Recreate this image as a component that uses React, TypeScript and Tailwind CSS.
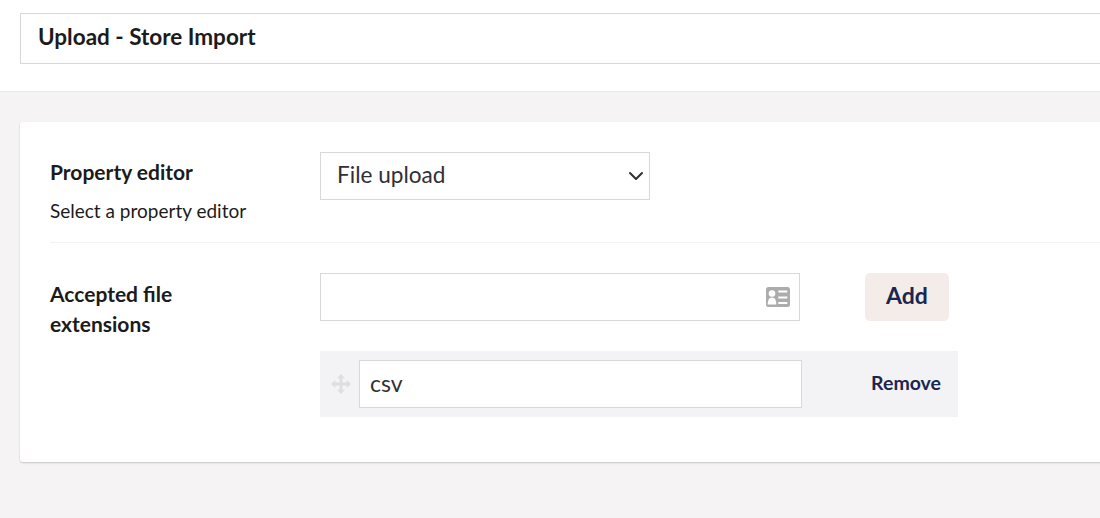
import { ChevronDown } from 'lucide-react';

function ContactIcon() {
  return (
    <svg viewBox="0 0 24 20" className="w-6 h-5 shrink-0" aria-hidden="true">
      <rect x="0" y="0" width="24" height="20" rx="2.5" fill="#acacac" />
      <circle cx="6" cy="6.500" r="3.300" fill="#fff" />
      <path d="M1.700 17.500c0-4.200 1.400-7 4.300-7s4.300 2.800 4.300 7z" fill="#fff" />
      <rect x="12.300" y="3.500" width="9" height="2" fill="#fff" />
      <rect x="12.300" y="9.500" width="9" height="2" fill="#fff" />
      <rect x="12.300" y="15" width="9" height="2" fill="#fff" />
    </svg>
  );
}

function MoveIcon() {
  return (
    <svg viewBox="0 0 20 20" className="w-5 h-5 translate-x-px" aria-hidden="true" fill="#dedee0">
      <path d="M10 0l4 4.200h-2.600v4.400h4.400V6l4.200 4-4.200 4v-2.600h-4.400v4.400H14L10 20l-4-4.200h2.600v-4.400H4.200V14L0 10l4.200-4v2.600h4.400V4.200H6z" />
    </svg>
  );
}

export default function App() {
  return (
    <div className="w-[1100px] h-[518px] overflow-hidden bg-[#f5f3f4] font-['Lato',sans-serif]">
      <div className="h-[92px] bg-white border-b border-[#e9e9eb] pt-[13px] pl-5">
        <div className="w-[1200px] h-[51px] border border-[#d8d7d9] flex items-center pl-[17px] pb-[3px] text-[22.5px] font-bold text-[#1b1b1b]">
          Upload - Store Import
        </div>
      </div>

      <div className="pt-[30px] pl-5">
        <div className="w-[1200px] h-[340px] bg-white rounded-[3px] shadow-[0_1px_2px_rgba(0,0,0,0.2)] px-[30px] pt-[30px]">
          <div className="flex h-[91px] border-b border-[#f3f3f5]">
            <div className="w-[270px] shrink-0">
              <div className="text-[21px] leading-[40px] font-bold text-[#1b1b1b] h-[42px]">Property editor</div>
              <div className="text-[19px] leading-[33px] text-[#1b1b1b]">Select a property editor</div>
            </div>
            <div className="relative w-[330px] h-12">
              <select className="w-full h-full appearance-none bg-white border border-[#d8d7d9] pl-4 pb-[3px] text-[22.6px] text-[#303033] outline-none font-['Lato',sans-serif]">
                <option>File upload</option>
              </select>
              <ChevronDown className="absolute right-[2px] top-3 w-6 h-6 text-[#303033] pointer-events-none" strokeWidth={2} />
            </div>
          </div>

          <div className="flex pt-[30px]">
            <div className="w-[270px] shrink-0 text-[21px] leading-[30px] font-bold text-[#1b1b1b] pt-[6px]">
              Accepted file
              <br />
              extensions
            </div>
            <div className="w-[638px]">
              <div className="flex items-start">
                <div className="w-[480px] h-12 border border-[#d8d7d9] flex items-center justify-end pr-[9px]">
                  <ContactIcon />
                </div>
                <button className="ml-[65px] w-[84px] h-12 pb-[3px] rounded-[5px] bg-[#f3ece9] text-[23px] font-bold text-[#1b264f]">
                  Add
                </button>
              </div>
              <div className="mt-[30px] h-[66px] bg-[#f3f3f5] flex items-center">
                <div className="w-[39px] flex justify-center">
                  <MoveIcon />
                </div>
                <div className="w-[443px] h-12 bg-white border border-[#d8d7d9] flex items-center pl-[10px] pb-[2px] text-[23px] text-[#303033]">
                  csv
                </div>
                <div className="flex-1 text-right pr-[17px] pb-[2px] text-[19.5px] font-bold text-[#1b264f]">Remove</div>
              </div>
            </div>
          </div>
        </div>
      </div>
    </div>
  );
}
